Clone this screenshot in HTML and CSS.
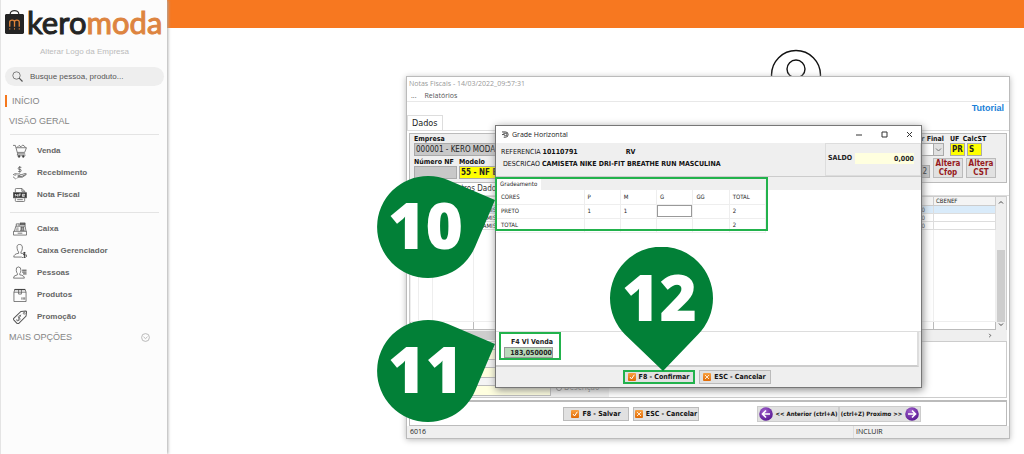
FILE: index.html
```html
<!DOCTYPE html>
<html lang="pt-BR">
<head>
<meta charset="utf-8">
<title>Kero Moda - Notas Fiscais</title>
<link rel="stylesheet" href="styles.css">
</head>
<body>
<svg class="defs" aria-hidden="true">
  <defs>
    <linearGradient id="orange" x1="0" y1="0" x2="0" y2="1"><stop offset="0" stop-color="#f9a040"/><stop offset="1" stop-color="#e06a05"/></linearGradient>
    <radialGradient id="purple" cx=".4" cy=".3" r=".7"><stop offset="0" stop-color="#a060cc"/><stop offset="1" stop-color="#5a1a94"/></radialGradient>
    <symbol id="ok" viewBox="0 0 8 8"><rect width="8" height="8" rx="1" fill="url(#orange)"/><path d="M2 4l1.500 2L6.300 1.800" fill="none" stroke="#fff" stroke-width="1"/></symbol>
    <symbol id="no" viewBox="0 0 8 8"><rect width="8" height="8" rx="1" fill="url(#orange)"/><path d="M2 2l4 4M6 2l-4 4" fill="none" stroke="#ffe9d0" stroke-width="1"/></symbol>
    <symbol id="pin-side" viewBox="0 0 120 104"><path d="M72 5L119 25 99 72A51 51 0 1 1 72 5Z" fill="#028037"/></symbol>
    <symbol id="pin-down" viewBox="0 0 104 124"><path d="M15 87.500L53 124 88 87.500A51.500 51.500 0 1 0 15 87.500Z" fill="#028037"/></symbol>
  </defs>
</svg>
<div class="page">
  <aside class="sidebar">
    <div class="logo">
      <svg class="bag" viewBox="0 0 20 26"><path d="M5.500 7V4.500a4.500 3.500 0 0 1 9 0V7" fill="none" stroke="#333" stroke-width="1.300"/><path d="M1 4.500h18l1 1v18.500q0 1.500-1.500 1.500h-17q-1.500 0-1.500-1.500V5.500Z" fill="#242424"/><path d="M5 18v-5q0-2 2.500-2t2.500 2v5m0-5q0-2 2.500-2t2.500 2v5" fill="none" stroke="#e0853a" stroke-width="1.400"/><path d="M5 19.500v1.500m5-1.500v1.500m5-1.500v1.500" stroke="#e0853a" stroke-width="1"/></svg>
      <span class="brand">kero<span class="brand-alt">moda</span></span>
    </div>
    <a class="change-logo" href="#">Alterar Logo da Empresa</a>
    <label class="search">
      <svg viewBox="0 0 11 11" width="11" height="11"><circle cx="4.500" cy="4.500" r="3.700" fill="none" stroke="#666" stroke-width=".8"/><path d="M7.200 7.200L10.500 10.500" stroke="#555" stroke-width="1.200"/></svg>
      <input type="text" placeholder="Busque pessoa, produto..." aria-label="Busca">
    </label>
    <a class="section current" href="#">INÍCIO</a>
    <a class="section" href="#">VISÃO GERAL</a>
    <nav class="menu">
      <a href="#"><svg class="mi" viewBox="0 0 15 15"><path d="M0 1.500h2.500L5 10.500h8M3.400 4h11L12.500 9H4.700M4.500 3.500l2-2 2 1.500 2-2 3 2.500"/><path d="M5 10.500l-.5 1.500h9"/><circle cx="6.500" cy="13.300" r="1" fill="#333"/><circle cx="11" cy="13.300" r="1" fill="#333"/></svg>Venda</a>
      <a href="#"><svg class="mi" viewBox="0 0 15 15"><path d="M9 1.500Q5.500.6 5.500 2.300T7.200 3.700 8.800 5.200 5.500 5.800M7.200 0v7"/><path d="M0 9.500q2-2 4.500-1h3q1.500.8 0 1.800H5M8.500 9.500L13 8q2 0 1 1.300L10 12H5.500L4 13.500M0 11.500l3 2.500M5 11.200h4.500L13.500 9M1.500 10l2-.5"/></svg>Recebimento</a>
      <a href="#"><svg class="mi" viewBox="0 0 15 15"><path d="M2.500 4.500V1.500q0-1 1-1H9.500L12.500 3.500v1M9.500.5v3h3M2.500 11v2.500q0 1 1 1h8q1 0 1-1V11M4.500 12.500h6"/><rect x=".5" y="5" width="14" height="5.500" fill="#333"/><path d="M2.500 9V6.500L5 9V6.500M6.500 9V6.500H8.500M6.500 7.700H8M10 7.700h2.500V6.700H10V9h2.500" stroke="#fff"/></svg>Nota Fiscal</a>
    </nav>
    <nav class="menu">
      <a href="#"><svg class="mi" viewBox="0 0 15 15"><path d="M.5 10h14v4H.5zM1.500 10L3 4.500h10L14 10M3.500 4.500V2h3v2.500M7.500 3V1h5.500v3.500M5 12h5M8 6h4M7.800 7.500h4.500M7.500 9h5M9 5v4M11 5v4M3.500 6.500h2.500M3 8.500h3"/><rect x="8" y="1.500" width="4.500" height="1.500" fill="#666"/></svg>Caixa</a>
      <a href="#"><svg class="mi" viewBox="0 0 15 15"><path d="M4.500 5Q3.500.5 7 .5T10 5Q9.500 8 8.500 8.500V10M4.500 5Q5 8 6 8.500V10Q1 10.500.8 14H9.500M8.500 10h1.500"/><path d="M13.500 9.500q-2.800-.8-2.800.8t2.800 1.500-.2 2.500-2.800-.3M12.200 8.500v6.500" stroke="#333" stroke-width="1"/></svg>Caixa Gerenciador</a>
      <a href="#"><svg class="mi" viewBox="0 0 15 15"><path d="M3.500 5Q2.800 1 5.800 1T8.500 5Q8 7.500 7.300 8v1.500Q12 10 12.200 13H.5Q.5 10 4.700 9.500V8Q4 7.500 3.500 5"/><path d="M9.800 4.500h4.700M9.800 6.500h4.700M10.800 8.500h3.700" stroke="#333" stroke-width="1"/></svg>Pessoas</a>
      <a href="#"><svg class="mi" viewBox="0 0 15 15"><path d="M1 4.500h13v10H1zM1 4.500L2 1.500h11l1 3M6 1.500v5h3v-5M9.500 10v2.500M11 10v2.500M12.500 10v2.500"/><path d="M1.500 1.800h11.500" stroke="#333" stroke-width="1"/></svg>Produtos</a>
      <a href="#"><svg class="mi" viewBox="0 0 15 15"><path d="M8.500 1.500L13.500 1q1 0 1 1L14 6.500 6 14.500q-.8.500-1.500 0L.8 10.500q-.6-.8 0-1.500Z" stroke-width="1.100"/><circle cx="12" cy="3.500" r="1"/><path d="M8.500 6.500q-2.500-1.200-2.800.5t1.500 2-.8 2-2.600-1M8.500 5L5 11.500"/></svg>Promoção</a>
    </nav>
    <a class="section more" href="#">MAIS OPÇÕES<svg viewBox="0 0 9 9" width="9" height="9"><circle cx="4.500" cy="4.500" r="3.900"/><path d="M2.500 3.800l2 1.800 2-1.800"/></svg></a>
  </aside>

  <main class="main">
    <header class="topbar"></header>
    <svg class="avatar" viewBox="0 0 52 52"><circle cx="26" cy="26" r="24.500"/><circle cx="26" cy="20" r="9"/></svg>

    <section class="window invoice">
      <div class="title">Notas Fiscais - 14/03/2022_09:57:31</div>
      <div class="menubar"><span>...</span><span>Relatórios</span></div>
      <a class="tutorial" href="#">Tutorial</a>
      <div class="tabs"><span class="tab-main">Dados</span></div>
      <div class="form">
        <div class="form-left">
          <div class="field"><label for="emp">Empresa</label><input id="emp" class="in gray wide" value="000001 - KERO MODA"></div>
          <div class="row">
            <div class="field"><label for="nf">Número NF</label><input id="nf" class="in gray w43"></div>
            <div class="field"><label for="mod">Modelo</label><input id="mod" class="in yellow w120" value="55 - NF ELETRONICA"></div>
          </div>
        </div>
        <div class="form-right">
          <div class="row row-top">
            <div class="field final"><label for="fin">Consumidor Final</label><span class="pick"><select id="fin" class="in"><option></option></select><svg viewBox="0 0 9 11"><path d="M2 4.500l2.500 2.500L7 4.500"/></svg></span></div>
            <div class="field"><label for="uf">UF</label><input id="uf" class="in yellow w15" value="PR"></div>
            <div class="field calc"><label for="cst">CalcST</label><input id="cst" class="in yellow w15" value="S"></div>
          </div>
          <div class="row row-bottom">
            <input class="in gray w43 code" value="2" aria-label="Código">
            <button class="alter">Altera<br>Cfop</button>
            <button class="alter">Altera<br>CST</button>
          </div>
        </div>
      </div>
      <div class="subtab">Outros Dados</div>
      <div class="items">
        <table class="items-table">
          <colgroup><col class="c8"><col class="c14"><col class="c41"><col><col class="c62"></colgroup>
          <thead><tr><th></th><th></th><th></th><th></th><th>CBENEF</th></tr></thead>
          <tbody>
            <tr class="sel"><td></td><td></td><td></td><td class="zero">CAMISETA<span>0</span></td><td></td></tr>
            <tr><td></td><td></td><td></td><td class="zero">CAMISETA<span>0</span></td><td></td></tr>
            <tr><td></td><td></td><td></td><td class="zero">CAMISETA<span>0</span></td><td></td></tr>
            <tr class="fill"><td></td><td></td><td></td><td></td><td></td></tr>
            <tr class="foot"><td></td><td></td><td></td><td></td><td></td></tr>
          </tbody>
        </table>
        <div class="vscroll"><svg viewBox="0 0 6 4"><path d="M1 3l2-2 2 2"/></svg><div class="thumb"></div><svg viewBox="0 0 6 4"><path d="M1 1l2 2 2-2"/></svg></div>
      </div>
      <div class="hscroll"><div class="hthumb"></div><svg viewBox="0 0 4 6"><path d="M1 1l2 2-2 2"/></svg></div>
      <div class="lower">
        <div class="lower-fields">
          <input class="cream" aria-label="Campo 1"><input class="cream" aria-label="Campo 2"><input class="cream" aria-label="Campo 3">
        </div>
        <div class="lower-radio"><label><input type="radio">Descrição</label></div>
      </div>
      <div class="actions">
        <button class="btn"><svg><use href="#ok"/></svg>F8 - Salvar</button>
        <button class="btn"><svg><use href="#no"/></svg>ESC - Cancelar</button>
        <div class="pager">
          <button class="btn nav"><svg viewBox="0 0 14 14"><circle cx="7" cy="7" r="6.800" fill="url(#purple)"/><path d="M11 7H4M7 3.500L3.500 7 7 10.500" fill="none" stroke="#fff" stroke-width="1.600"/></svg>&lt;&lt; Anterior (ctrl+A)</button>
          <button class="btn nav">(ctrl+Z) Proximo &gt;&gt;<svg viewBox="0 0 14 14"><circle cx="7" cy="7" r="6.800" fill="url(#purple)"/><path d="M3 7h7M7 3.500L10.500 7 7 10.500" fill="none" stroke="#fff" stroke-width="1.600"/></svg></button>
        </div>
      </div>
      <div class="status"><span>6016</span><span class="mode">INCLUIR</span></div>
    </section>

    <section class="window grade">
      <div class="grade-title">
        <svg class="app" viewBox="0 0 8 8"><path d="M0 .5h4q3 0 3 3t-3 3H2M1.500 2h3q1 0 1 1.500t-1.500 1.300H2.500M0 3.500h3" fill="none" stroke="#333" stroke-width="1"/></svg>
        <span>Grade Horizontal</span>
        <svg class="ctl" viewBox="0 0 58 8"><path d="M1 4h6M27 1h5v5h-5zM52 1l5 5M57 1l-5 5"/></svg>
      </div>
      <div class="grade-head">
        <div class="ref">
          <div class="ref-line"><span>REFERENCIA</span><b>10110791</b><b class="rv">RV</b></div>
          <div class="ref-line desc"><span>DESCRICAO</span><b>CAMISETA NIKE DRI-FIT BREATHE RUN MASCULINA</b></div>
        </div>
        <div class="saldo"><label for="saldo">SALDO</label><input id="saldo" value="0,000"></div>
      </div>
      <div class="grade-tabs"><span>Gradeamento</span></div>
      <div class="grade-body">
        <table class="sizes">
          <thead><tr><th class="first">CORES</th><th>P</th><th>M</th><th>G</th><th>GG</th><th>TOTAL</th></tr></thead>
          <tbody>
            <tr><td>PRETO</td><td>1</td><td>1</td><td class="edit"><input aria-label="PRETO G"></td><td></td><td>2</td></tr>
            <tr><td>TOTAL</td><td></td><td></td><td></td><td></td><td>2</td></tr>
          </tbody>
        </table>
      </div>
      <div class="price">
        <div class="price-box"><label for="vl">F4 Vl Venda</label><input id="vl" value="183,050000"></div>
      </div>
      <div class="grade-actions">
        <button class="btn marked"><svg><use href="#ok"/></svg>F8 - Confirmar</button>
        <button class="btn"><svg><use href="#no"/></svg>ESC - Cancelar</button>
      </div>
      <div class="outline"></div>
    </section>

    <div class="pin pin-10"><svg><use href="#pin-side"/></svg><span>10</span></div>
    <div class="pin pin-11"><svg><use href="#pin-side"/></svg><span>11</span></div>
    <div class="pin pin-12"><svg><use href="#pin-down"/></svg><span>12</span></div>
  </main>
</div>
</body>
</html>
```

FILE: styles.css
```css
* { box-sizing: border-box; }
body { margin: 0; background: #fff; font-family: "Liberation Sans", Arial, sans-serif; font-size: 8px; line-height: 10px; color: #222; }
a { color: inherit; text-decoration: none; }
button, input, select { font: inherit; color: inherit; margin: 0; padding: 0; border: 0; border-radius: 0; min-width: 0; }
svg { display: block; flex: none; }
.defs { position: absolute; width: 0; height: 0; }
.page { display: flex; min-height: 100vh; }

/* sidebar */
.sidebar { flex: none; width: 167px; position: relative; z-index: 1; background: #fcfcfc; border-left: 1px solid #e4e4e4; box-shadow: 1px 0 3px #aaa; padding: 9px 3px 0 4px; display: flex; flex-direction: column; }
.logo { display: flex; gap: 3px; height: 27px; align-items: flex-start; }
.bag { width: 19px; height: 26px; }
.brand { font: 400 31px/26px Lato, sans-serif; color: #242424; -webkit-text-stroke: 1px currentColor; }
.brand-alt { color: #dd8440; }
.change-logo { font-size: 8px; text-align: center; color: #bbb; margin: 11px 0 10px; line-height: 10px; }
.search { display: flex; align-items: center; gap: 7px; height: 19px; border-radius: 10px; background: #eee; padding: 0 7px; }
.search input { flex: 1; background: none; }
.search input::placeholder { color: #555; opacity: 1; }
.section { font-size: 9px; line-height: 12px; color: #858585; padding-left: 4px; margin-top: 8px; }
.current { border-left: 2px solid #f5781e; margin-top: 9px; padding-left: 5px; }
.menu { display: flex; flex-direction: column; margin: 7px 5px 0; padding: 5px 0 0 3px; border-top: 1px solid #e4e4e4; font-weight: 700; color: #666; }
.menu a { display: flex; align-items: center; gap: 10px; height: 22px; }
.menu + .menu { margin-top: 6px; }
.mi { width: 14px; height: 14px; fill: none; stroke: #555; stroke-width: .8; }
.more { display: flex; justify-content: space-between; align-items: center; padding-right: 14px; margin-top: 3px; }
.more svg { fill: none; stroke: #aaa; stroke-width: .8; }

/* main area */
.main { flex: 1; position: relative; min-width: 0; }
.topbar { height: 28px; background: #f77820; }
.avatar { position: absolute; left: 603px; top: 49px; width: 52px; height: 52px; fill: none; stroke: #111; stroke-width: 1.400; }
.window { position: absolute; display: flex; flex-direction: column; font-family: "DejaVu Sans Condensed", "DejaVu Sans", sans-serif; }

/* invoice window */
.invoice { left: 239px; right: 14px; top: 76px; height: 363px; background: #fff; border: 1px solid #bbb; box-shadow: 0 1px 6px #bbb; }
.title { font: 7px/14px "Open Sans", sans-serif; color: #999; padding-left: 2px; }
.menubar { display: flex; gap: 8px; font: 7px/10px "Open Sans", sans-serif; color: #555; padding: 0 0 0 4px; border-bottom: 1px solid #e8e8e8; }
.tutorial { align-self: flex-end; font: 700 9px/12px "Liberation Sans", sans-serif; color: #1a80d8; padding-right: 5px; }
.tabs { display: flex; height: 16px; background: #fff; margin-top: 1px; border-bottom: 1px solid #ddd; }
.tab-main { border: 1px solid #ddd; border-bottom: 0; font-size: 9px; line-height: 15px; padding: 0 4px; background: #fff; }
.form { display: flex; justify-content: space-between; margin: 2px 2px 0; height: 50px; background: #efefef; border: 1px solid #bbb; padding: 1px 10px 0 4px; }
.form-left, .form-right { display: flex; flex-direction: column; gap: 2px; }
.field { display: flex; flex-direction: column; white-space: nowrap; }
.field label { font-weight: 700; font-size: 7px; line-height: 8px; color: #111; }
.row { display: flex; gap: 2px; }
.in { height: 13px; border: 1px solid #aaa; background: #fff; font-size: 8px; padding-left: 1px; }
.gray { background: #c8c8c8; }
.yellow { background: #ff0; font-weight: 700; }
.wide { width: 170px; }
.w43 { width: 43px; }
.w120 { width: 120px; }
.w15 { width: 15px; }
.row-top { justify-content: flex-end; padding-right: 14px; }
.final { align-items: flex-end; margin-right: 4px; }
.pick { display: flex; width: 44px; }
.pick select { appearance: none; width: 100%; }
.pick svg { width: 11px; height: 13px; margin-left: -11px; background: #e1e1e1; border: 1px solid #aaa; fill: none; stroke: #777; pointer-events: none; }
.calc { width: 15px; align-items: center; }
.row-bottom { justify-content: flex-end; align-items: flex-end; gap: 3px; }
.code { text-align: right; padding-right: 2px; }
.alter { width: 30px; height: 20px; background: #e1e1e1; border: 1px solid #bbb; color: #96191c; font-weight: 700; font-size: 8px; line-height: 9px; }
.subtab { line-height: 12px; padding-left: 44px; color: #333; border-bottom: 1px solid #ddd; }
.items { display: flex; flex: 1; margin: 0 2px; border: 1px solid #ccc; border-bottom: 0; }
.items-table { flex: 1; width: 100%; height: 100%; border-collapse: collapse; table-layout: fixed; font-size: 6px; line-height: 7px; }
.items-table th { height: 8px; padding: 0 0 0 2px; text-align: left; font-weight: 400; background: #f4f4f4; border: 1px solid #ccc; border-top: 0; }
.items-table td { height: 8px; padding: 0 0 0 2px; border: 1px solid #ddd; }
.items-table .sel td { background: #d9ebfa; }
.items-table .zero { padding-left: 5px; }
.items-table .zero span { float: right; padding-right: 8px; }
.items-table .fill td { height: auto; border-color: #eee; }
.items-table .foot td { border-color: #bbb; }
.c8 { width: 8px; } .c14 { width: 14px; } .c41 { width: 41px; } .c62 { width: 62px; }
.vscroll { width: 10px; background: #efefef; display: flex; flex-direction: column; align-items: center; padding: 3px 1px; }
.vscroll svg, .hscroll svg { fill: none; stroke: #444; stroke-width: 1; width: 6px; height: 5px; }
.thumb { width: 8px; height: 72px; margin-top: auto; background: #cdcdcd; }
.hscroll { display: flex; justify-content: space-between; align-items: center; height: 11px; margin: 0 2px; padding-right: 14px; background: #efefef; }
.hthumb { width: 240px; height: 9px; background: #cdcdcd; }
.lower { display: flex; height: 57px; margin: 0 2px; border: 1px solid #ccc; }
.lower-fields { width: 141px; padding: 7px 0 0; display: flex; flex-direction: column; gap: 7px; background: #f4f4f4; }
.cream { height: 11px; border: 1px solid #bbb; background: #ffffdf; }
.lower-radio { width: 58px; background: #efefef; display: flex; align-items: flex-end; padding: 0 0 4px 5px; }
.lower-radio label { display: flex; align-items: center; gap: 2px; color: #777; }
.lower-radio input { width: 6px; height: 6px; }
.actions { display: flex; align-items: center; height: 26px; margin: 2px 2px 0; border: 1px solid #bbb; border-width: 2px 1px 1px; padding-left: 153px; gap: 4px; }
.btn { display: flex; align-items: center; justify-content: center; gap: 3px; height: 14px; border: 1px solid #bbb; background: #e1e1e1; font-weight: 700; font-size: 7px; padding: 0 5px; color: #111; white-space: nowrap; }
.btn svg { width: 8px; height: 8px; }
.actions > .btn { width: 66px; }
.pager { display: flex; margin-left: 54px; }
.nav { height: 16px; padding: 0 3px; border-color: #ccc; font-size: 6px; width: 82px; }
.nav svg { width: 14px; height: 14px; }
.status { display: flex; font: 7px/12px "Open Sans", sans-serif; background: #efefef; padding-left: 3px; }
.mode { margin-left: auto; width: 156px; border-left: 1px solid #ddd; padding-left: 2px; }

/* size grid dialog */
.grade { left: 328px; width: 427px; top: 125px; height: 263px; background: #efefef; border: 1px solid #777; box-shadow: 1px 2px 8px #888; }
.grade-title { display: flex; align-items: center; gap: 3px; height: 17px; background: #fff; font: 7px/17px "Open Sans", sans-serif; padding: 0 8px 0 6px; }
.app { width: 7px; height: 8px; }
.ctl { width: 58px; height: 8px; margin-left: auto; fill: none; stroke: #333; stroke-width: 1; }
.grade-head { display: flex; justify-content: space-between; height: 34px; border-bottom: 1px solid #ccc; }
.ref { padding: 3px 0 0 5px; }
.ref-line { display: flex; gap: 2px; line-height: 12px; font-size: 7px; color: #111; }
.desc { padding-left: 2px; }
.rv { margin-left: 46px; }
.saldo { width: 96px; display: flex; gap: 3px; padding: 9px 6px 0 2px; border: 1px solid #ddd; font-weight: 700; font-size: 7px; }
.saldo input { flex: 1; width: 40px; height: 11px; background: #ffffdf; text-align: right; }
.grade-tabs { height: 13px; padding: 1px 0 0 1px; }
.grade-tabs span { display: inline-block; background: #fff; font-size: 6px; line-height: 12px; padding: 0 4px 0 3px; }
.grade-body { flex: 1; background: #fff; border-bottom: 1px solid #ddd; }
.sizes { width: 270px; border-collapse: collapse; table-layout: fixed; font-size: 6px; line-height: 8px; color: #222; }
.sizes th, .sizes td { height: 14px; padding: 0 0 0 3px; text-align: left; font-weight: 400; border: 1px solid #eee; border-top: 0; }
.sizes th:first-child, .sizes td:first-child { border-left: 0; padding-left: 5px; }
.sizes .first { width: 88px; }
.sizes .edit { padding: 0; }
.edit input { display: block; width: 100%; height: 12px; border: 1px solid #999; }
.price { height: 35px; background: #fff; border-right: 2px solid #ddd; border-bottom: 2px solid #ccc; margin-right: 2px; padding: 0 0 0 3px; }
.price-box { width: 62px; height: 28px; border: 2px solid #22b24c; padding: 3px 6px 0 3px; text-align: right; font-weight: 700; font-size: 7px; display: flex; flex-direction: column; line-height: 10px; }
.price-box input { height: 11px; border: 1px solid #999; background: #bcd9bc; text-align: right; font-size: 7px; }
.grade-actions { display: flex; justify-content: center; align-items: center; gap: 4px; height: 20px; padding-right: 24px; }
.grade-actions .btn { width: 72px; }
.grade-actions .marked { border: 2px solid #22b24c; }
.outline { position: absolute; left: -1px; top: 51px; width: 273px; height: 54px; border: 2px solid #22b24c; }

/* numbered markers */
.pin { position: absolute; width: 120px; height: 104px; }
.pin svg { width: 100%; height: 100%; }
.pin span { position: absolute; left: 12px; top: 0; width: 74px; line-height: 100px; text-align: center; font-family: "Open Sans", sans-serif; font-weight: 800; font-size: 64px; color: #fff; }
.pin-10 { left: 209px; top: 175px; }
.pin-11 { left: 209px; top: 319px; }
.pin-12 { left: 443px; top: 247px; width: 104px; height: 124px; }
```
